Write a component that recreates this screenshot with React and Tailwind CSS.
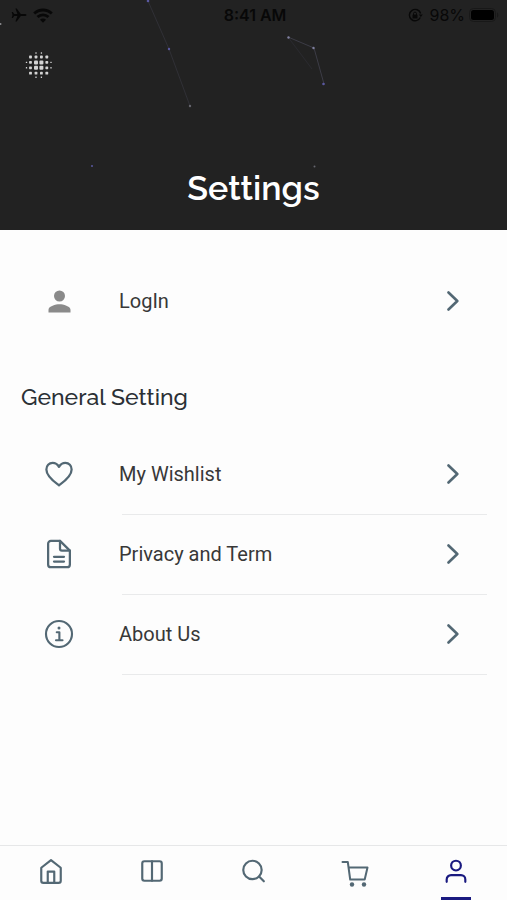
import React from "react";

const Feather = ({ size = 26, strokeWidth = 2, children }) => (
  <svg
    width={size}
    height={size}
    viewBox="0 0 24 24"
    fill="none"
    stroke="currentColor"
    strokeWidth={strokeWidth}
    strokeLinecap="round"
    strokeLinejoin="round"
    aria-hidden="true"
  >
    {children}
  </svg>
);

const ProfileIcon = () => (
  <svg width="33" height="33" viewBox="0 0 24 24" fill="#8a8a8a" aria-hidden="true">
    <path d="M12 12a4 4 0 1 0 0-8 4 4 0 0 0 0 8zm0 2c-2.67 0-8 1.34-8 4v2h16v-2c0-2.66-5.33-4-8-4z" />
  </svg>
);

const HeartIcon = () => (
  <Feather size={30} strokeWidth={1.8}>
    <path d="M12 21C10 19.4 1.9 14.2 1.9 8.3 1.9 5.4 4 3.1 6.9 3.1c2.100 0 3.900 1 5.100 3.200 1.200-2.200 3-3.200 5.100-3.200 2.900 0 5 2.300 5 5.200C22.100 14.200 14 19.400 12 21z" />
  </Feather>
);

const DocumentIcon = () => (
  <Feather size={30} strokeWidth={1.8}>
    <path d="M12.800 1.500H5.500a2.200 2.200 0 0 0-2.200 2.200v16.600a2.200 2.200 0 0 0 2.200 2.200h13a2.200 2.200 0 0 0 2.200-2.200V9.300z" />
    <path d="M12.800 1.500v6.300a1.500 1.500 0 0 0 1.500 1.500h6.400" />
    <path d="M8 14.200h8M8 18h8" />
  </Feather>
);

const InfoIcon = () => (
  <Feather size={30} strokeWidth={1.7}>
    <circle cx="12" cy="12" r="10.400" />
    <path d="M10.200 10.600h2.100v6.200M9.600 17h5.200" />
    <circle cx="12" cy="7.200" r="1.200" fill="currentColor" stroke="none" />
  </Feather>
);

const ChevronIcon = () => (
  <svg
    width="12"
    height="20"
    viewBox="0 0 12 20"
    fill="none"
    stroke="#536874"
    strokeWidth="2.6"
    strokeLinecap="round"
    strokeLinejoin="round"
    aria-hidden="true"
  >
    <path d="M1.500 1.500 10.300 10l-8.800 8.500" />
  </svg>
);

const HomeIcon = () => (
  <Feather>
    <path d="M3 9l9-7 9 7v12a2 2 0 0 1-2 2H5a2 2 0 0 1-2-2z" />
    <path d="M9 22.500V12.500h6v10" />
  </Feather>
);

const ColumnsIcon = () => (
  <Feather>
    <rect x="3" y="3" width="18" height="18" rx="2" />
    <path d="M12 3v18" />
  </Feather>
);

const SearchIcon = () => (
  <Feather>
    <circle cx="11.500" cy="11" r="8.500" />
    <path d="M22 21.500l-4.400-4.400" />
  </Feather>
);

const CartIcon = () => (
  <svg
    width="28"
    height="34"
    viewBox="0 -6 28 34"
    fill="none"
    stroke="currentColor"
    strokeWidth="2"
    strokeLinecap="round"
    strokeLinejoin="round"
    aria-hidden="true"
  >
    <path d="M1.500 2h5.300l2.400 17.500h14.500L26.500 7.500H7.600" />
    <circle cx="11" cy="24.500" r="2.200" fill="currentColor" stroke="none" />
    <circle cx="23" cy="24.500" r="2.200" fill="currentColor" stroke="none" />
  </svg>
);

const UserIcon = () => (
  <Feather>
    <circle cx="12" cy="7" r="4.500" />
    <path d="M3.400 22v-2.200a4 4 0 0 1 4-4h9.200a4 4 0 0 1 4 4V22" />
  </Feather>
);

// dot size per ring, empty cells are 0
const dots = [
  [0, 0, 1.4, 1.4, 0, 0],
  [0, 2.8, 2.8, 2.8, 2.8, 0],
  [1.4, 2.8, 4, 4, 2.8, 1.4],
  [1.4, 2.8, 4, 4, 2.8, 1.4],
  [0, 2.8, 2.8, 2.8, 2.8, 0],
  [0, 0, 1.4, 1.4, 0, 0],
];

const dotColumns = [1.5, 5.5, 11, 16.4, 21.8, 26];
const dotRows = [2, 6, 11.4, 16.8, 22.2, 26.2];

const MenuDots = () => (
  <svg width="28" height="28" viewBox="0 0 28 28" fill="#d4d4d4" aria-hidden="true">
    {dots.map((row, r) =>
      row.map((size, c) =>
        size ? (
          <rect
            key={`${r}-${c}`}
            x={dotColumns[c] - size / 2}
            y={dotRows[r] - size / 2}
            width={size}
            height={size}
            rx={size / 4}
          />
        ) : null
      )
    )}
  </svg>
);

const Constellation = () => (
  <svg
    className="absolute inset-0 w-full h-full"
    viewBox="0 0 507 230"
    preserveAspectRatio="xMidYMid slice"
    fill="none"
    aria-hidden="true"
  >
    <g stroke="#303036" strokeWidth="1">
      <path d="M148 1l21 48 21 57" />
      <path d="M288 37l26 11 10 36" stroke="#3c3c46" />
      <path d="M288 37l24 32" stroke="#2b2b30" />
    </g>
    <g fill="#5a58a0">
      <circle cx="148" cy="1" r="1.300" />
      <circle cx="169" cy="49" r="1.200" />
      <circle cx="190" cy="106" r="1.200" fill="#66666e" />
      <circle cx="288.500" cy="37.500" r="1.200" fill="#8080a0" />
      <circle cx="313.500" cy="48" r="1.200" fill="#8080a0" />
      <circle cx="323.500" cy="84" r="1.300" />
      <circle cx="92" cy="166" r="1" />
      <circle cx="314.500" cy="166.500" r="1" fill="#66666e" />
      <circle cx="0.500" cy="24" r="1" fill="#88888c" />
    </g>
  </svg>
);

const StatusBar = () => (
  <div className="relative grid grid-cols-3 items-center h-[30px] pl-[11px] pr-2 text-[#080808]">
    <div className="flex items-center gap-1.5">
      <svg width="16" height="14" viewBox="0 0 16 14" fill="currentColor" aria-hidden="true">
        <path d="M15.500 7c0-.8-1-1.100-2-1.100H9.800L5.700.5H4.400l2 5.400H3.300L1.800 4H.7l.8 3-.8 3h1.100l1.500-1.900h3.100l-2 5.400h1.300l4.100-5.400h3.700c1 0 2-.3 2-1.100z" />
      </svg>
      <svg width="20" height="15" viewBox="0 0 20 15" fill="none" stroke="currentColor" strokeWidth="2.800" aria-hidden="true">
        <path d="M1.200 5.600a12.500 12.500 0 0 1 17.600 0" />
        <path d="M4.500 9.100a7.800 7.800 0 0 1 11 0" />
        <path d="M7 11.800a4.200 4.200 0 0 1 6 0L10 14.800z" fill="currentColor" stroke="none" />
      </svg>
    </div>
    <span className="text-center text-base font-semibold whitespace-nowrap">8:41 AM</span>
    <div className="flex items-center justify-end gap-1">
      <svg className="mr-0.5" width="15" height="15" viewBox="0 0 15 15" fill="none" stroke="currentColor" strokeWidth="1.400" aria-hidden="true">
        <path d="M12.300 9.500A5.700 5.700 0 1 1 12.600 5.500" />
        <path d="M10.800 6.500h4L12.800 9z" fill="currentColor" stroke="none" />
        <rect x="4.500" y="6.500" width="5" height="4" rx=".6" fill="currentColor" stroke="none" />
        <path d="M5.500 7V5.600a1.500 1.500 0 0 1 3 0V7" strokeWidth="1" />
      </svg>
      <span className="text-base">98%</span>
      <svg width="30" height="14" viewBox="0 0 30 14" aria-hidden="true">
        <rect x=".5" y=".5" width="26" height="13" rx="4" fill="none" stroke="#181818" />
        <rect x="2" y="2" width="23" height="10" rx="2.500" fill="#000" />
        <path d="M28 4.500c1.800.6 1.800 4.400 0 5z" fill="#181818" />
      </svg>
    </div>
  </div>
);

const SettingRow = ({ icon, label, divider }) => (
  <a href="#" className="relative flex items-center h-20 pl-[42px] pr-12 text-[#536874]">
    <span className="flex justify-center w-[34px]">{icon}</span>
    <span className="flex-1 ml-[43px] text-xl text-[#383838]">{label}</span>
    <ChevronIcon />
    {divider && <span className="absolute left-[122px] right-5 -bottom-px h-px bg-[#e9eaeb]" />}
  </a>
);

const settings = [
  { label: "My Wishlist", icon: <HeartIcon /> },
  { label: "Privacy and Term", icon: <DocumentIcon /> },
  { label: "About Us", icon: <InfoIcon /> },
];

const tabs = [
  { label: "Home", icon: <HomeIcon /> },
  { label: "Categories", icon: <ColumnsIcon /> },
  { label: "Search", icon: <SearchIcon /> },
  { label: "Cart", icon: <CartIcon /> },
  { label: "Account", icon: <UserIcon />, active: true },
];

const App = () => {
  return (
    <div className="flex flex-col min-h-screen bg-[#fdfdfd] font-['Roboto',sans-serif]">
      {/* Header */}
      <header className="relative flex flex-col bg-[#222222] pb-[18px] font-['Inter',sans-serif]">
        <Constellation />
        <StatusBar />
        <button aria-label="Menu" className="relative self-start mt-[21px] ml-[25px] cursor-pointer">
          <MenuDots />
        </button>
        <h1 className="relative mt-[85px] text-center text-[34px] leading-12 font-semibold text-white font-['Raleway','Lato',sans-serif]">
          Settings
        </h1>
      </header>

      {/* Settings list */}
      <main className="flex-1 pt-[31px]">
        <SettingRow label="LogIn" icon={<ProfileIcon />} />
        <h2 className="mt-10 mb-[21px] pl-[21px] text-[23px] leading-8 font-medium text-[#2b3035] font-['Raleway','Lato',sans-serif]">
          General Setting
        </h2>
        {settings.map((item) => (
          <SettingRow key={item.label} label={item.label} icon={item.icon} divider />
        ))}
      </main>

      {/* Bottom tabs */}
      <nav className="sticky bottom-0 grid grid-cols-5 h-[55px] bg-[#fdfdfd] border-t border-[#e6e7e8]">
        {tabs.map((tab) => (
          <a
            key={tab.label}
            href="#"
            aria-label={tab.label}
            className={
              tab.active
                ? "relative flex items-center justify-center pb-1 text-[#1a1a80]"
                : "relative flex items-center justify-center pb-1 text-[#536874]"
            }
          >
            {tab.icon}
            {tab.active && <span className="absolute bottom-0 w-[30px] h-[3px] bg-[#1a1a80]" />}
          </a>
        ))}
      </nav>
    </div>
  );
};

export default App;
